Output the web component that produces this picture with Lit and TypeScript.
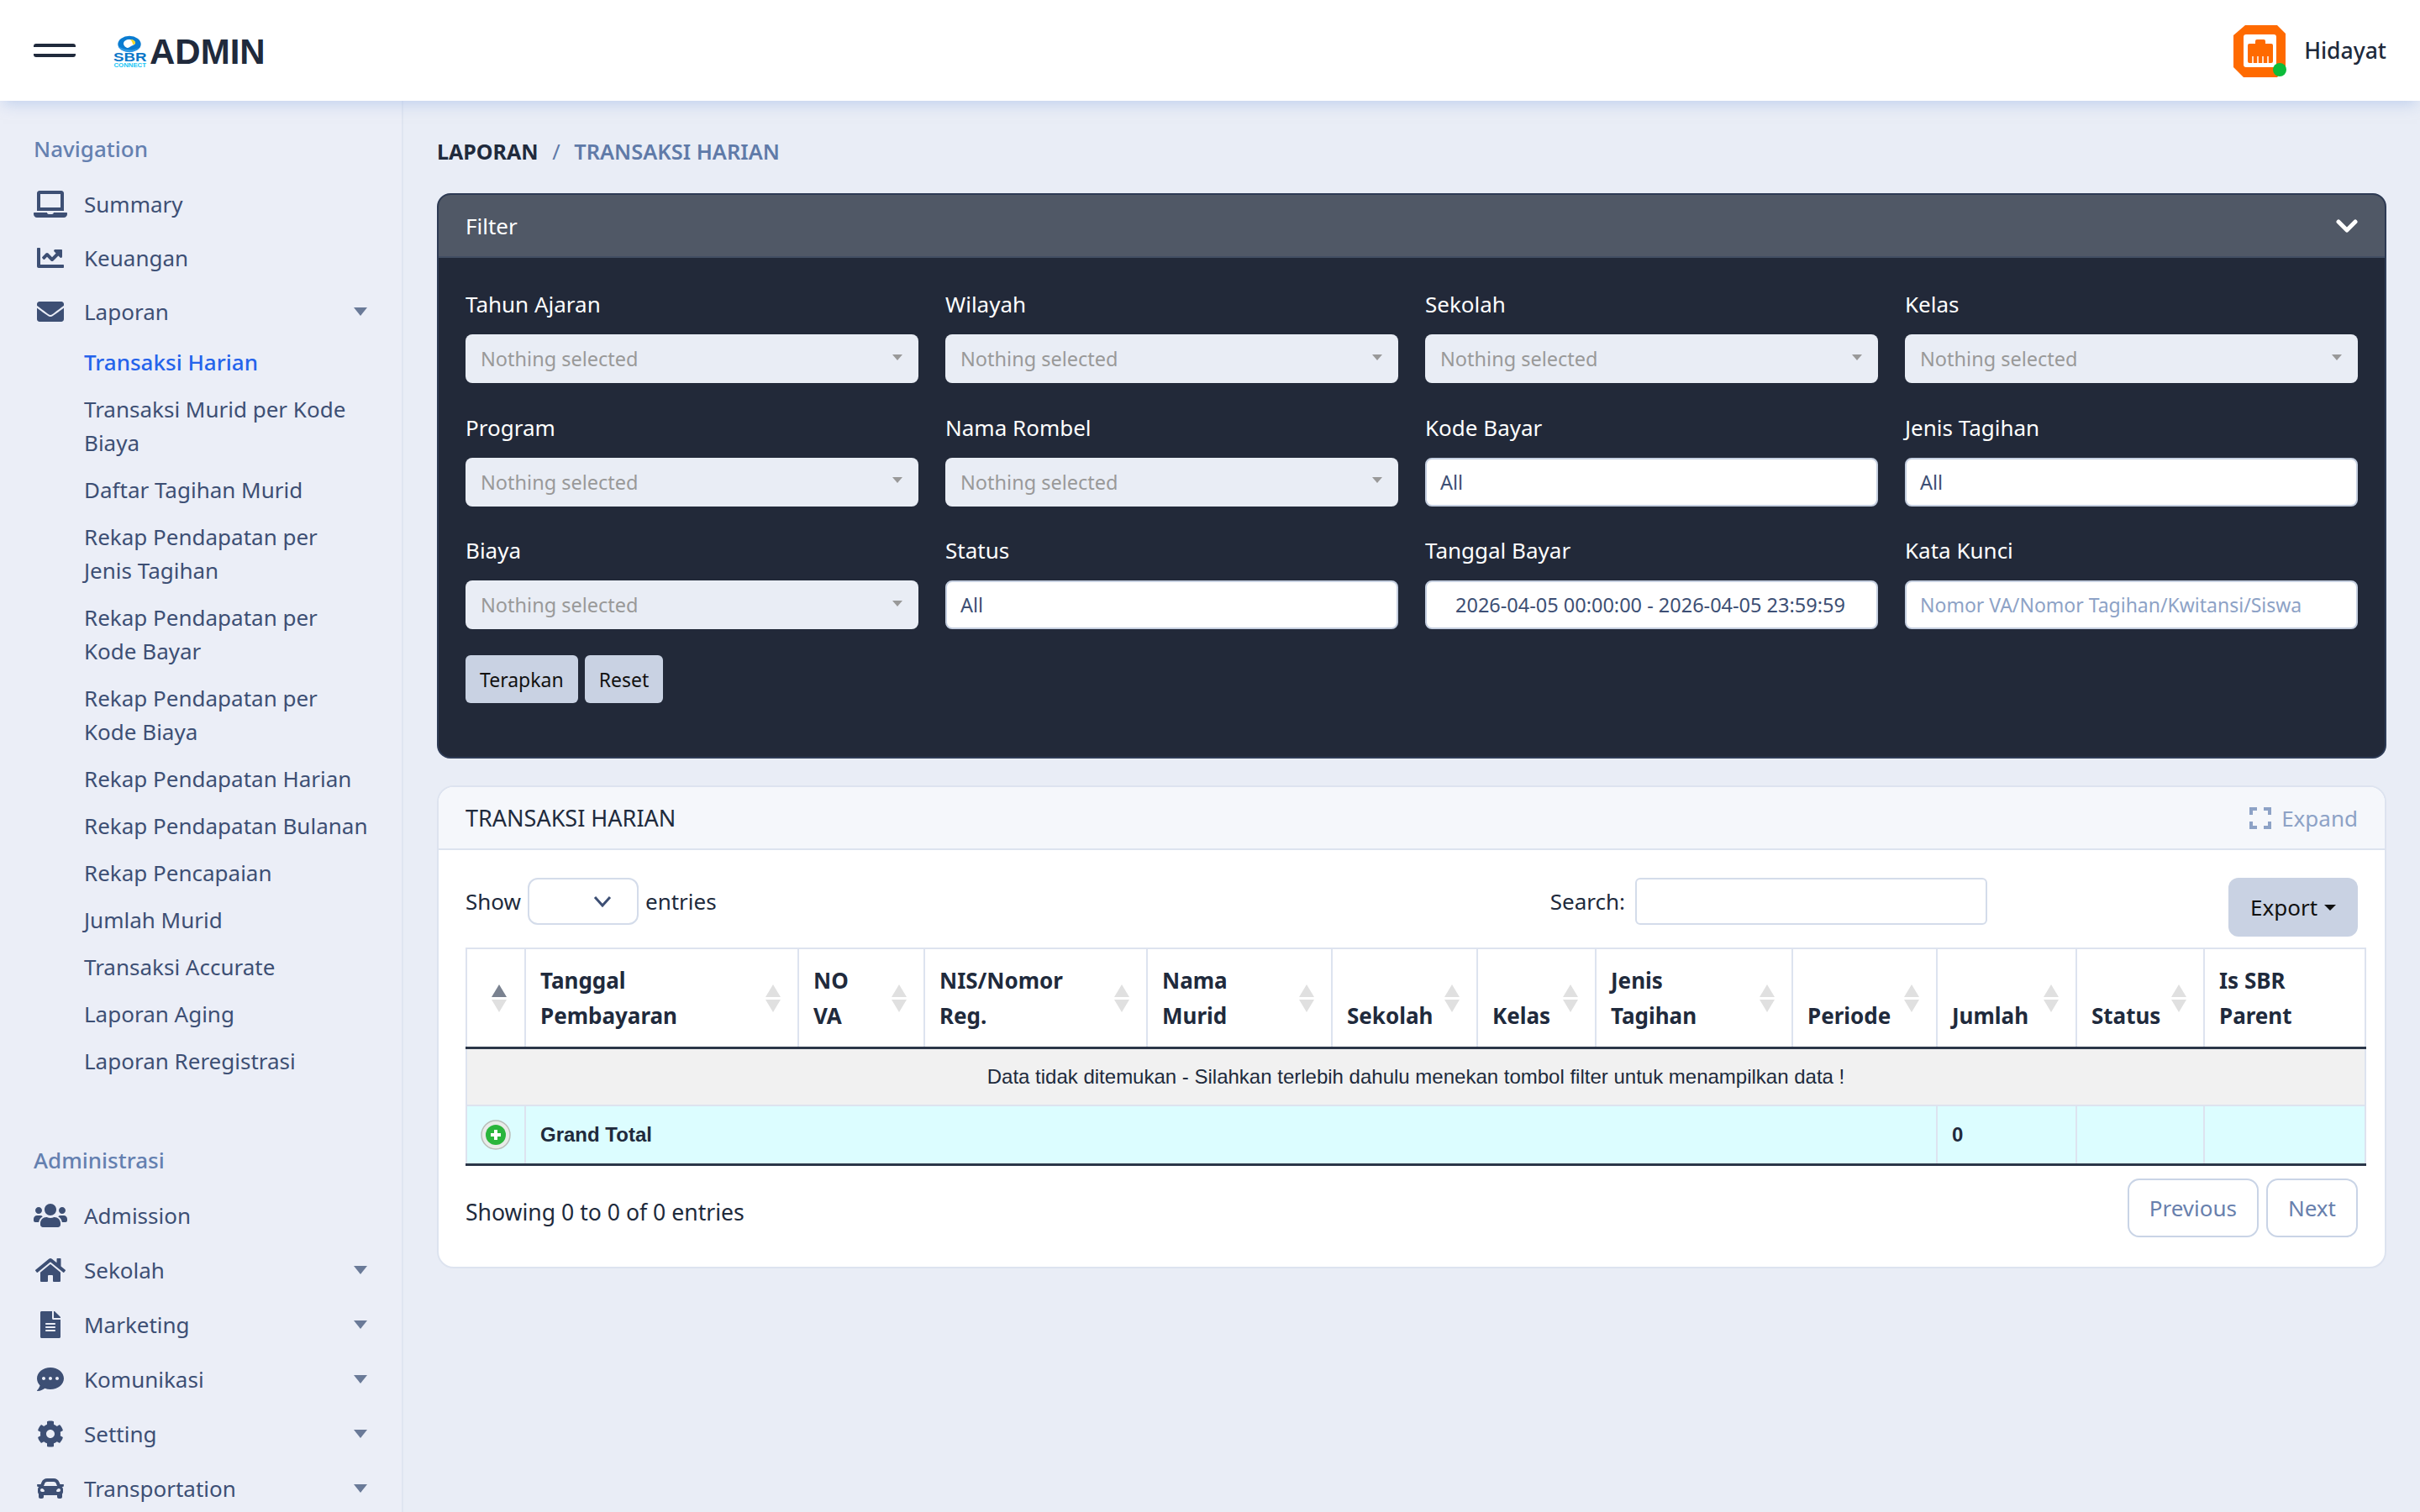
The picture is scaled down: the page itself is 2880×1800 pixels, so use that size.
import { LitElement, css, html } from "lit";
import { customElement } from "lit/decorators.js";

const icons: Record<string, [number, string]> = {
  laptop: [640, "M624 416H381.54c-.74 19.81-14.71 32-32.74 32H288c-18.69 0-33.02-17.47-32.77-32H16c-8.8 0-16 7.2-16 16v16c0 35.2 28.8 64 64 64h512c35.2 0 64-28.8 64-64v-16c0-8.8-7.2-16-16-16zM576 48c0-26.4-21.6-48-48-48H112C85.6 0 64 21.6 64 48v336h512V48zm-64 272H128V64h384v256z"],
  chart: [512, "M496 384H64V80c0-8.84-7.16-16-16-16H16C7.16 64 0 71.16 0 80v336c0 17.67 14.33 32 32 32h464c8.84 0 16-7.16 16-16v-32c0-8.84-7.16-16-16-16zM464 96H345.94c-21.38 0-32.09 25.85-16.97 40.97l32.4 32.4L288 242.75l-73.37-73.37c-12.5-12.5-32.76-12.5-45.25 0l-68.69 68.69c-6.25 6.25-6.25 16.38 0 22.63l22.62 22.62c6.25 6.25 16.38 6.25 22.63 0L192 237.25l73.37 73.37c12.5 12.5 32.76 12.5 45.25 0l96-96 32.4 32.4c15.12 15.12 40.97 4.41 40.97-16.97V112c.01-8.84-7.15-16-15.99-16z"],
  envelope: [512, "M502.3 190.8c3.9-3.1 9.7-.2 9.7 4.7V400c0 26.5-21.5 48-48 48H48c-26.5 0-48-21.5-48-48V195.6c0-5 5.7-7.8 9.7-4.7 22.4 17.4 52.1 39.5 154.1 113.6 21.1 15.4 56.7 47.8 92.2 47.6 35.7.3 72-32.8 92.3-47.6 102-74.1 131.6-96.3 154-113.7zM256 320c23.2.4 56.6-29.2 73.4-41.4 132.7-96.3 142.8-104.7 173.4-128.7 5.8-4.5 9.2-11.5 9.2-18.9v-19c0-26.5-21.5-48-48-48H48C21.5 64 0 85.5 0 112v19c0 7.4 3.4 14.3 9.2 18.9 30.6 23.9 40.7 32.4 173.4 128.7 16.8 12.2 50.2 41.8 73.4 41.4z"],
  users: [640, "M96 224c35.3 0 64-28.7 64-64s-28.7-64-64-64-64 28.7-64 64 28.7 64 64 64zm448 0c35.3 0 64-28.7 64-64s-28.7-64-64-64-64 28.7-64 64 28.7 64 64 64zm32 32h-64c-17.6 0-33.5 7.1-45.1 18.6 40.3 22.1 68.9 62 75.1 109.4h66c17.7 0 32-14.3 32-32v-32c0-35.3-28.7-64-64-64zm-256 0c61.9 0 112-50.1 112-112S381.9 32 320 32 208 82.1 208 144s50.1 112 112 112zm76.8 32h-8.3c-20.8 10-43.9 16-68.5 16s-47.6-6-68.5-16h-8.3C179.6 288 128 339.6 128 403.2V432c0 26.5 21.5 48 48 48h288c26.5 0 48-21.5 48-48v-28.8c0-63.6-51.6-115.2-115.2-115.2zm-223.7-13.4C161.5 263.1 145.6 256 128 256H64c-35.3 0-64 28.7-64 64v32c0 17.7 14.3 32 32 32h65.9c6.3-47.4 34.9-87.3 75.2-109.4z"],
  home: [576, "M280.37 148.26L96 300.11V464a16 16 0 0 0 16 16l112.06-.29a16 16 0 0 0 15.92-16V368a16 16 0 0 1 16-16h64a16 16 0 0 1 16 16v95.64a16 16 0 0 0 16 16.05L464 480a16 16 0 0 0 16-16V300L295.67 148.26a12.19 12.19 0 0 0-15.3 0zM571.6 251.47L488 182.56V44.05a12 12 0 0 0-12-12h-56a12 12 0 0 0-12 12v72.61L318.47 43a48 48 0 0 0-61 0L4.34 251.47a12 12 0 0 0-1.6 16.9l25.5 31A12 12 0 0 0 45.15 301l235.22-193.74a12.19 12.19 0 0 1 15.3 0L530.9 301a12 12 0 0 0 16.9-1.6l25.5-31a12 12 0 0 0-1.7-16.93z"],
  file: [384, "M224 136V0H24C10.7 0 0 10.7 0 24v464c0 13.3 10.7 24 24 24h336c13.3 0 24-10.7 24-24V160H248c-13.2 0-24-10.8-24-24zm64 236c0 6.6-5.4 12-12 12H108c-6.6 0-12-5.4-12-12v-8c0-6.6 5.4-12 12-12h168c6.6 0 12 5.4 12 12v8zm0-64c0 6.6-5.4 12-12 12H108c-6.6 0-12-5.4-12-12v-8c0-6.6 5.4-12 12-12h168c6.6 0 12 5.4 12 12v8zm0-72v8c0 6.6-5.4 12-12 12H108c-6.6 0-12-5.4-12-12v-8c0-6.6 5.4-12 12-12h168c6.6 0 12 5.4 12 12zm96-114.1v6.1H256V0h6.1c6.4 0 12.5 2.5 17 7l97.9 98c4.5 4.5 7 10.6 7 16.9z"],
  comment: [512, "M256 32C114.6 32 0 125.1 0 240c0 49.6 21.4 95 57 130.7C44.5 421.1 2.7 466 2.2 466.5c-2.2 2.3-2.8 5.7-1.5 8.7S4.8 480 8 480c66.3 0 116-31.8 140.6-51.4 32.7 12.3 69 19.4 107.4 19.4 141.4 0 256-93.1 256-208S397.4 32 256 32zM128 272c-17.7 0-32-14.3-32-32s14.3-32 32-32 32 14.3 32 32-14.3 32-32 32zm128 0c-17.7 0-32-14.3-32-32s14.3-32 32-32 32 14.3 32 32-14.3 32-32 32zm128 0c-17.7 0-32-14.3-32-32s14.3-32 32-32 32 14.3 32 32-14.3 32-32 32z"],
  cog: [512, "M487.4 315.7l-42.6-24.6c4.3-23.2 4.3-47 0-70.2l42.6-24.6c4.9-2.8 7.1-8.6 5.5-14-11.1-35.6-30-67.8-54.7-94.6-3.8-4.1-10-5.1-14.8-2.3L380.8 110c-17.9-15.4-38.5-27.3-60.8-35.1V25.8c0-5.6-3.9-10.5-9.4-11.7-36.7-8.2-74.3-7.8-109.2 0-5.5 1.2-9.4 6.1-9.4 11.7V75c-22.2 7.9-42.8 19.8-60.8 35.1L88.7 85.5c-4.9-2.8-11-1.9-14.8 2.3-24.7 26.7-43.6 58.9-54.7 94.6-1.7 5.4.6 11.2 5.5 14L67.3 221c-4.3 23.2-4.3 47 0 70.2l-42.6 24.6c-4.9 2.8-7.1 8.6-5.5 14 11.1 35.6 30 67.8 54.7 94.6 3.8 4.1 10 5.1 14.8 2.3l42.6-24.6c17.9 15.4 38.5 27.3 60.8 35.1v49.2c0 5.6 3.9 10.5 9.4 11.7 36.7 8.2 74.3 7.8 109.2 0 5.5-1.2 9.4-6.1 9.4-11.7v-49.2c22.2-7.9 42.8-19.8 60.8-35.1l42.6 24.6c4.9 2.8 11 1.9 14.8-2.3 24.7-26.7 43.6-58.9 54.7-94.6 1.5-5.5-.7-11.3-5.6-14.1zM256 336c-44.1 0-80-35.9-80-80s35.9-80 80-80 80 35.9 80 80-35.9 80-80 80z"],
  car: [512, "M499.99 176h-59.87l-16.64-41.6C406.38 91.63 365.57 64 319.5 64h-127c-46.06 0-86.88 27.63-103.99 70.4L71.87 176H12.01C4.2 176-1.53 183.34.37 190.91l6 24C7.7 220.25 12.5 224 18.01 224h20.07C24.65 235.73 16 252.78 16 272v48c0 16.12 6.16 30.67 16 41.93V416c0 17.67 14.33 32 32 32h32c17.67 0 32-14.33 32-32v-32h256v32c0 17.67 14.33 32 32 32h32c17.67 0 32-14.33 32-32v-54.07c9.84-11.25 16-25.8 16-41.93v-48c0-19.22-8.65-36.27-22.07-48H494c5.51 0 10.31-3.75 11.64-9.09l6-24c1.89-7.57-3.84-14.91-11.65-14.91zm-352.06-17.83c7.29-18.22 24.94-30.17 44.57-30.17h127c19.63 0 37.28 11.95 44.57 30.17L384 208H128l19.93-49.83zM96 319.8c-19.2 0-32-12.76-32-31.9S76.8 256 96 256s48 28.71 48 47.85-28.8 15.95-48 15.95zm320 0c-19.2 0-48 3.19-48-15.95S396.8 256 416 256s32 12.76 32 31.9-12.8 31.9-32 31.9z"],
};

const navTop = [
  { icon: "laptop", label: "Summary" },
  { icon: "chart", label: "Keuangan" },
  { icon: "envelope", label: "Laporan", caret: true },
];

const laporan = [
  "Transaksi Harian",
  "Transaksi Murid per Kode\nBiaya",
  "Daftar Tagihan Murid",
  "Rekap Pendapatan per\nJenis Tagihan",
  "Rekap Pendapatan per\nKode Bayar",
  "Rekap Pendapatan per\nKode Biaya",
  "Rekap Pendapatan Harian",
  "Rekap Pendapatan Bulanan",
  "Rekap Pencapaian",
  "Jumlah Murid",
  "Transaksi Accurate",
  "Laporan Aging",
  "Laporan Reregistrasi",
];

const navAdmin = [
  { icon: "users", label: "Admission" },
  { icon: "home", label: "Sekolah", caret: true },
  { icon: "file", label: "Marketing", caret: true },
  { icon: "comment", label: "Komunikasi", caret: true },
  { icon: "cog", label: "Setting", caret: true },
  { icon: "car", label: "Transportation", caret: true },
];

const filters = [
  { label: "Tahun Ajaran", kind: "select", value: "Nothing selected" },
  { label: "Wilayah", kind: "select", value: "Nothing selected" },
  { label: "Sekolah", kind: "select", value: "Nothing selected" },
  { label: "Kelas", kind: "select", value: "Nothing selected" },
  { label: "Program", kind: "select", value: "Nothing selected" },
  { label: "Nama Rombel", kind: "select", value: "Nothing selected" },
  { label: "Kode Bayar", kind: "input", value: "All" },
  { label: "Jenis Tagihan", kind: "input", value: "All" },
  { label: "Biaya", kind: "select", value: "Nothing selected" },
  { label: "Status", kind: "input", value: "All" },
  { label: "Tanggal Bayar", kind: "date", value: "2026-04-05 00:00:00 - 2026-04-05 23:59:59" },
  { label: "Kata Kunci", kind: "hint", value: "Nomor VA/Nomor Tagihan/Kwitansi/Siswa" },
];

const columns = [
  { label: "", width: 70, first: true },
  { label: "Tanggal\nPembayaran", width: 325 },
  { label: "NO\nVA", width: 150 },
  { label: "NIS/Nomor\nReg.", width: 265 },
  { label: "Nama\nMurid", width: 220 },
  { label: "Sekolah", width: 173 },
  { label: "Kelas", width: 141 },
  { label: "Jenis\nTagihan", width: 234 },
  { label: "Periode", width: 172 },
  { label: "Jumlah", width: 166 },
  { label: "Status", width: 152 },
  { label: "Is SBR\nParent", width: 192, noSort: true },
];

@customElement("app-root")
export class AppRoot extends LitElement {
  static styles = css`
    :host {
      display: block;
      width: 2880px;
      height: 1800px;
      overflow: hidden;
      background: #e9edf6;
      color: #202a3c;
      font-family: "Noto Sans", sans-serif;
      font-size: 26px;
      line-height: 40px;
    }

    * {
      box-sizing: border-box;
    }

    /* top bar */
    .topbar {
      position: relative;
      z-index: 2;
      height: 120px;
      background: #fff;
      display: flex;
      align-items: center;
      padding: 0 40px;
      box-shadow: 0 8px 16px -4px rgba(160, 185, 230, 0.55);
    }

    .burger {
      width: 50px;
      height: 16.5px;
      border-top: 4.5px solid #202a3c;
      border-bottom: 4.5px solid #202a3c;
      border-radius: 3px;
      margin-right: 45px;
    }

    .logo {
      width: 40px;
      height: 38px;
      margin-right: 3px;
      margin-top: 1px;
    }

    .brand {
      font-family: "Liberation Sans", sans-serif;
      font-weight: 700;
      font-size: 42px;
      line-height: 48px;
      margin-top: 3px;
    }

    .user {
      margin-left: auto;
      display: flex;
      align-items: center;
    }

    .avatar {
      width: 66px;
      height: 62px;
      margin-right: 18px;
      margin-top: 2px;
    }

    .user-name {
      font-weight: 500;
      font-size: 26.5px;
    }

    .layout {
      display: flex;
      height: 1680px;
    }

    /* sidebar */
    .sidebar {
      width: 480px;
      flex: none;
      background: #ebeef7;
      border-right: 2px solid #dfe5f1;
      padding: 37px 40px 0;
      overflow: hidden;
    }

    .group {
      color: #6480b0;
      font-weight: 500;
      height: 40px;
      margin-bottom: 14px;
    }

    .group.second {
      margin-top: 70px;
    }

    .item {
      height: 64px;
      display: flex;
      align-items: center;
      color: #3d4f74;
    }

    .admin .item {
      height: 64.9px;
    }

    .ico {
      width: 40px;
      height: 32px;
      margin-right: 20px;
      flex: none;
      display: flex;
      justify-content: center;
    }

    .ico svg {
      height: 32px;
      fill: #3d4f74;
      display: block;
    }

    .caret {
      margin-left: auto;
      margin-right: 1px;
      width: 0;
      height: 0;
      border-left: 8px solid transparent;
      border-right: 8px solid transparent;
      border-top: 10px solid #6a7a98;
    }

    .sub {
      padding-left: 60px;
    }

    .sub div {
      padding: 8px 0;
      color: #3d4f74;
      white-space: pre-line;
    }

    .sub .active {
      color: #2563eb;
      font-weight: 500;
    }

    /* content */
    .main {
      flex: 1;
      padding: 40px 40px 0;
      min-width: 0;
    }

    .crumb {
      height: 40px;
      margin-bottom: 30px;
      font-size: 25.4px;
      font-weight: 600;
      color: #5f7aa8;
    }

    .crumb b {
      font-size: 25px;
      font-weight: 700;
      color: #202a3c;
    }

    .crumb .sep {
      font-weight: 400;
      margin: 0 10px;
    }

    .filter {
      border: 2px solid #2e3b55;
      border-radius: 16px;
      background: #222939;
      overflow: hidden;
    }

    .filter-head {
      height: 75px;
      background: #505866;
      border-bottom: 2px solid #424e63;
      color: #fff;
      display: flex;
      align-items: center;
      justify-content: space-between;
      padding: 0 32px;
    }

    .filter-head svg {
      width: 26px;
      height: 18px;
      fill: none;
      stroke: #fff;
      stroke-width: 5;
      stroke-linecap: round;
      stroke-linejoin: round;
    }

    .filter-body {
      padding: 35px 32px 64px;
    }

    .filter-grid {
      display: grid;
      grid-template-columns: repeat(4, minmax(0, 1fr));
      gap: 32.5px 32px;
    }

    .field label {
      display: block;
      color: #fff;
      height: 40px;
      margin-bottom: 16px;
    }

    .control {
      height: 58px;
      border-radius: 8px;
      display: flex;
      align-items: center;
      padding: 0 18px;
      white-space: nowrap;
      font-size: 23.5px;
    }

    .control.select {
      background: #e9edf5;
      color: #999;
      justify-content: space-between;
    }

    .control.select i {
      width: 0;
      height: 0;
      border-left: 6px solid transparent;
      border-right: 6px solid transparent;
      border-top: 7px solid #999;
      margin-right: 1px;
      margin-top: -4px;
    }

    .control.input,
    .control.date,
    .control.hint {
      background: #fff;
      border: 2px solid #c5cfe0;
      color: #3d4f74;
      padding-left: 16px;
    }

    .control.date {
      padding-left: 34px;
    }

    .control.hint {
      color: #8da2c6;
      font-size: 23px;
    }

    .actions {
      display: flex;
      gap: 8px;
      margin-top: 31px;
    }

    .actions span {
      height: 57px;
      padding: 0 17px;
      border-radius: 6px;
      background: #c9d2e3;
      color: #111;
      display: flex;
      align-items: center;
      font-size: 23px;
    }

    .table-card {
      margin-top: 32px;
      background: #fff;
      border: 2px solid #dde3ef;
      border-radius: 20px;
      overflow: hidden;
    }

    .table-head {
      height: 75px;
      background: #f5f7fb;
      border-bottom: 2px solid #dde3ef;
      padding: 0 32px;
      display: flex;
      align-items: center;
      justify-content: space-between;
    }

    .table-title {
      font-size: 27px;
    }

    .expand {
      display: flex;
      align-items: center;
      color: #8da2c6;
      gap: 12px;
    }

    .expand svg {
      width: 26px;
      height: 26px;
      fill: none;
      stroke: #8da2c6;
      stroke-width: 4;
    }

    .table-body {
      padding: 33px 32px 35px;
    }

    .toolbar {
      display: flex;
      align-items: flex-start;
      height: 70px;
    }

    .toolbar .txt {
      line-height: 56px;
    }

    .length {
      width: 132px;
      height: 56px;
      margin: 0 8px;
      border: 2px solid #d4dcea;
      border-radius: 12px;
      display: flex;
      align-items: center;
      justify-content: flex-end;
      padding-right: 30px;
    }

    .length svg {
      width: 22px;
      height: 14px;
      fill: none;
      stroke: #3d4f74;
      stroke-width: 3;
    }

    .search {
      margin-left: auto;
      margin-right: 287px;
      display: flex;
      gap: 12px;
    }

    .search-box {
      width: 419px;
      height: 56px;
      border: 2px solid #d4dcea;
      border-radius: 6px;
    }

    .export {
      width: 154px;
      height: 70px;
      border-radius: 12px;
      background: #c9d2e3;
      display: flex;
      align-items: center;
      justify-content: center;
      gap: 8px;
      color: #111;
    }

    .export i {
      width: 0;
      height: 0;
      border-left: 7px solid transparent;
      border-right: 7px solid transparent;
      border-top: 7px solid #111;
    }

    .table-wrap {
      width: 2260px;
      margin-top: 13px;
    }

    table {
      width: 2260px;
      table-layout: fixed;
      border-collapse: collapse;
    }

    th {
      position: relative;
      height: 118px;
      padding: 0 40px 0 17px;
      text-align: left;
      vertical-align: bottom;
      font-weight: 700;
      line-height: 42px;
      border: 2px solid #dde3ef;
      border-bottom: 3px solid #2b3648;
    }

    th .lbl {
      display: block;
      padding-bottom: 16px;
      white-space: pre-line;
    }

    .sort {
      position: absolute;
      right: 20px;
      top: 42px;
      display: flex;
      flex-direction: column;
      gap: 3px;
    }

    .sort i {
      width: 0;
      height: 0;
      border-left: 9px solid transparent;
      border-right: 9px solid transparent;
    }

    .sort .up {
      border-bottom: 15px solid #e0e0e0;
    }

    .sort .down {
      border-top: 15px solid #e0e0e0;
    }

    .first .sort {
      right: auto;
      left: 29px;
    }

    .first .sort .up {
      border-bottom-color: #7a8290;
    }

    td {
      font-family: "Liberation Sans", sans-serif;
      font-size: 24px;
      padding: 0 17px;
      border-left: 2px solid #dde3ef;
      border-right: 2px solid #dde3ef;
    }

    .empty td {
      height: 69px;
      background: #f1f1f1;
      text-align: center;
      border-bottom: 2px solid #dde3ef;
    }

    .total td {
      height: 70px;
      background: #dcfdff;
      font-weight: 700;
      border-bottom: 3px solid #2b3648;
    }

    .total td:first-child {
      padding: 0;
      text-align: center;
    }

    .plus {
      display: block;
      width: 36px;
      height: 36px;
      margin: 0 auto;
    }

    .foot {
      display: flex;
      align-items: center;
      justify-content: space-between;
      margin-top: 15px;
    }

    .foot-info {
      font-size: 26.6px;
      margin-top: 10px;
    }

    .pager {
      display: flex;
      gap: 9px;
    }

    .pager span {
      height: 70px;
      padding: 0 24px;
      border: 2px solid #c9d4e6;
      border-radius: 14px;
      color: #6880ad;
      display: flex;
      align-items: center;
    }
  `;

  private icon(name: string) {
    const [w, d] = icons[name];
    return html`<span class="ico"
      ><svg viewBox="0 0 ${w} 512"><path d=${d}></path></svg
    ></span>`;
  }

  private navItem(it: { icon: string; label: string; caret?: boolean }) {
    return html`<div class="item">
      ${this.icon(it.icon)}<span>${it.label}</span>
      ${it.caret ? html`<i class="caret"></i>` : ""}
    </div>`;
  }

  private renderSidebar() {
    return html`<aside class="sidebar">
      <div class="group">Navigation</div>
      ${navTop.map((it) => this.navItem(it))}
      <div class="sub">
        ${laporan.map(
          (t, i) => html`<div class=${i === 0 ? "active" : ""}>${t}</div>`,
        )}
      </div>
      <div class="group second">Administrasi</div>
      <div class="admin">${navAdmin.map((it) => this.navItem(it))}</div>
    </aside>`;
  }

  private renderFilter() {
    return html`<section class="filter">
      <div class="filter-head">
        <span>Filter</span>
        <svg viewBox="0 0 26 18"><path d="M3 4l10 10L23 4"></path></svg>
      </div>
      <div class="filter-body">
        <div class="filter-grid">
          ${filters.map(
            (f) => html`<div class="field">
              <label>${f.label}</label>
              <div class="control ${f.kind}">
                <span>${f.value}</span>
                ${f.kind === "select" ? html`<i></i>` : ""}
              </div>
            </div>`,
          )}
        </div>
        <div class="actions"><span>Terapkan</span><span>Reset</span></div>
      </div>
    </section>`;
  }

  private renderTable() {
    return html`<div class="table-wrap">
      <table>
        <colgroup>
          ${columns.map((c) => html`<col style="width:${c.width}px" />`)}
        </colgroup>
        <thead>
          <tr>
            ${columns.map(
              (c) => html`<th class=${c.first ? "first" : ""}>
                <span class="lbl">${c.label}</span>
                ${c.noSort
                  ? ""
                  : html`<span class="sort"><i class="up"></i><i class="down"></i></span>`}
              </th>`,
            )}
          </tr>
        </thead>
        <tbody>
          <tr class="empty">
            <td colspan="12">
              Data tidak ditemukan - Silahkan terlebih dahulu menekan tombol
              filter untuk menampilkan data !
            </td>
          </tr>
          <tr class="total">
            <td>
              <svg class="plus" viewBox="0 0 36 36">
                <circle cx="18" cy="18" r="17" fill="#e9ebe9" stroke="#b9bdb9" stroke-width="1.5"></circle>
                <circle cx="18" cy="18" r="12" fill="#2ab53c"></circle>
                <path d="M18 12v12M12 18h12" stroke="#fff" stroke-width="4"></path>
              </svg>
            </td>
            <td colspan="8">Grand Total</td>
            <td>0</td>
            <td></td>
            <td></td>
          </tr>
        </tbody>
      </table>
    </div>`;
  }

  render() {
    return html`
      <header class="topbar">
        <div class="burger"></div>
        <svg class="logo" viewBox="0 0 40 38">
          <ellipse cx="19" cy="10.500" rx="13.700" ry="9.700" fill="#0a7cd1"></ellipse>
          <path d="M6 13c2 4 6 7 13 7 5 0 9-2 11-5-4 2-8 3-12 2-5 0-9-2-12-4z" fill="#2f9ae6"></path>
          <path d="M12 10c0-3 3-5 7-5s7 2 7 4-3 3-5 4-3 2-4 2-5-2-5-5z" fill="#fff"></path>
          <path d="M20 5c3 0 6 1.500 6 4 0 1-1 2-3 2 0-2-1-4-3-6z" fill="#f6d927"></path>
          <text x="0" y="31" font-family="Liberation Sans" font-weight="700" font-size="14" fill="#0a76c8" textLength="39.500" lengthAdjust="spacingAndGlyphs">SBR</text>
          <text x="0.500" y="37.500" font-family="Liberation Sans" font-weight="700" font-size="7" fill="#17c6f5" textLength="38.500" lengthAdjust="spacingAndGlyphs">CONNECT</text>
        </svg>
        <div class="brand">ADMIN</div>
        <div class="user">
          <svg class="avatar" viewBox="0 0 66 62">
            <path d="M14 0h38l10 10v40l-10 12H12L0 50V12z" fill="#ff6a00"></path>
            <rect x="12" y="11" width="39" height="39" rx="3" fill="#fff"></rect>
            <path d="M17 24a2 2 0 0 1 2-2h7v-3a2 2 0 0 1 2-2h8a2 2 0 0 1 2 2v3h7a2 2 0 0 1 2 2v19a2 2 0 0 1-2 2h-26a2 2 0 0 1-2-2z" fill="#ff6a00"></path>
            <path d="M23 37v8M29 37v8M35 37v8M41 37v8" stroke="#fff" stroke-width="1.500"></path>
            <circle cx="55" cy="53" r="8" fill="#0cbc3a"></circle>
          </svg>
          <span class="user-name">Hidayat</span>
        </div>
      </header>
      <div class="layout">
        ${this.renderSidebar()}
        <main class="main">
          <div class="crumb">
            <b>LAPORAN</b><span class="sep"> / </span>TRANSAKSI HARIAN
          </div>
          ${this.renderFilter()}
          <section class="table-card">
            <div class="table-head">
              <span class="table-title">TRANSAKSI HARIAN</span>
              <span class="expand">
                <svg viewBox="0 0 26 26">
                  <path d="M2 9V2h7M17 2h7v7M24 17v7h-7M9 24H2v-7"></path>
                </svg>
                Expand
              </span>
            </div>
            <div class="table-body">
              <div class="toolbar">
                <span class="txt">Show</span>
                <div class="length">
                  <svg viewBox="0 0 22 14"><path d="M2 2l9 10 9-10"></path></svg>
                </div>
                <span class="txt">entries</span>
                <div class="search">
                  <span class="txt">Search:</span>
                  <div class="search-box"></div>
                </div>
                <div class="export">Export<i></i></div>
              </div>
              ${this.renderTable()}
              <div class="foot">
                <span class="foot-info">Showing 0 to 0 of 0 entries</span>
                <div class="pager"><span>Previous</span><span>Next</span></div>
              </div>
            </div>
          </section>
        </main>
      </div>
    `;
  }
}
